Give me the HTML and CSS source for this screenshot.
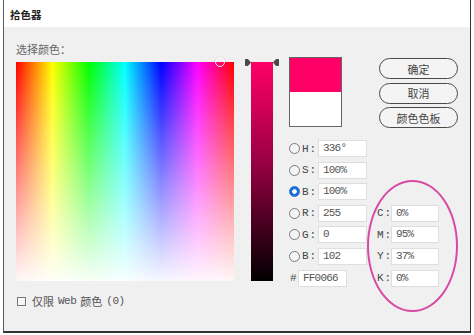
FILE: index.html
```html
<!DOCTYPE html>
<html lang="zh-CN">
<head>
    <meta charset="UTF-8">
    <meta name="viewport" content="width=device-width, initial-scale=1.0">
    <title>拾色器</title>
    <link rel="stylesheet" href="styles.css">
</head>
<body>
    <div class="window">
        <div class="title-bar">拾色器</div>

        <div class="dialog-body">
            <div class="left-col">
                <div class="pick-label">选择颜色：</div>
                <div class="color-field">
                    <span class="field-marker"></span>
                </div>
                <div class="web-only">
                    <span class="checkbox"></span>
                    <span>仅限</span>
                    <span class="mono">Web</span>
                    <span>颜色</span>
                    <span class="mono">(0)</span>
                </div>
            </div>

            <div class="slider-wrap">
                <div class="slider"></div>
                <svg class="arrow arrow-left" width="6" height="7" viewBox="0 0 6 7"><path d="M0.5 0.5 H3 L5.5 3.5 L3 6.5 H0.5 Z" fill="#4a4a4a" stroke="#4a4a4a" stroke-linejoin="round"/></svg>
                <svg class="arrow arrow-right" width="6" height="7" viewBox="0 0 6 7"><path d="M5.5 0.5 H3 L0.5 3.5 L3 6.5 H5.5 Z" fill="#4a4a4a" stroke="#4a4a4a" stroke-linejoin="round"/></svg>
            </div>

            <div class="right-col">
                <div class="top-row">
                    <div class="swatch">
                        <div class="swatch-new"></div>
                        <div class="swatch-old"></div>
                    </div>
                    <div class="buttons">
                        <button class="btn">确定</button>
                        <button class="btn">取消</button>
                        <button class="btn">颜色色板</button>
                    </div>
                </div>

                <div class="fields">
                    <div class="row r1"><span class="radio"></span><span class="key">H:</span><span class="val">336°</span></div>
                    <div class="row r2"><span class="radio"></span><span class="key">S:</span><span class="val">100%</span></div>
                    <div class="row r3"><span class="radio checked"></span><span class="key">B:</span><span class="val">100%</span></div>
                    <div class="row r4"><span class="radio"></span><span class="key">R:</span><span class="val">255</span></div>
                    <div class="row r5"><span class="radio"></span><span class="key">G:</span><span class="val">0</span></div>
                    <div class="row r6"><span class="radio"></span><span class="key">B:</span><span class="val">102</span></div>
                    <div class="row r7"><span class="key hash">#</span><span class="val">FF0066</span></div>

                    <div class="row cmyk r4"><span class="key">C:</span><span class="val">0%</span></div>
                    <div class="row cmyk r5"><span class="key">M:</span><span class="val">95%</span></div>
                    <div class="row cmyk r6"><span class="key">Y:</span><span class="val">37%</span></div>
                    <div class="row cmyk r7"><span class="key">K:</span><span class="val">0%</span></div>
                </div>
            </div>
        </div>

        <div class="highlight"></div>
    </div>
</body>
</html>
```

FILE: styles.css
```css
body {
    margin: 0;
    background-color: #ffffff;
    font-family: "Noto Sans CJK SC", sans-serif;
    color: #444;
}

.window {
    position: relative;
    box-sizing: border-box;
    margin-left: 3px;
    width: 468px;
    height: 333px;
    border-left: 1px solid #5a5a5a;
    border-right: 1px solid #333;
    border-bottom: 2px solid #333;
    background-color: #f0f0f0;
}

.title-bar {
    box-sizing: border-box;
    height: 27px;
    padding: 9px 0 0 6px;
    background-color: #ffffff;
    font-size: 10.5px;
    line-height: 12px;
    font-weight: bold;
    color: #222;
}

.dialog-body {
    display: flex;
    align-items: flex-start;
    padding-left: 12px;
}

/* left: saturation / hue field */
.left-col {
    margin-top: 15px;
}

.pick-label {
    height: 14px;
    margin-bottom: 6px;
    font-size: 11px;
    line-height: 14px;
    color: #666;
}

.color-field {
    position: relative;
    width: 218px;
    height: 219px;
    background:
        linear-gradient(to bottom, rgba(255, 255, 255, 0), rgba(255, 255, 255, 0.97)),
        linear-gradient(to right, #f00, #ff0, #0f0, #0ff, #00f, #f0f, #f00);
}

.field-marker {
    position: absolute;
    left: 199px;
    top: -5px;
    width: 10px;
    height: 10px;
    box-sizing: border-box;
    border: 1px solid rgba(255, 255, 255, 0.95);
    border-radius: 50%;
    box-shadow: 0 0 0 0.5px rgba(0, 0, 0, 0.15);
}

.web-only {
    display: flex;
    align-items: center;
    gap: 4px;
    height: 14px;
    margin-top: 13px;
    font-size: 11px;
    line-height: 14px;
    color: #555;
}

.checkbox {
    box-sizing: border-box;
    width: 9px;
    height: 9px;
    margin: 0 2px 0 1px;
    border: 1px solid #777;
    background-color: #f7f7f7;
}

.mono {
    font-family: "Liberation Mono", "Noto Sans CJK SC", monospace;
    letter-spacing: -0.5px;
}

/* brightness slider */
.slider-wrap {
    position: relative;
    width: 34px;
    margin: 35px 0 0 11px;
}

.slider {
    width: 22px;
    height: 219px;
    margin: 0 6px;
    background: linear-gradient(to bottom, #ff0066, #9a0044 45%, #000000);
}

.arrow {
    position: absolute;
    top: -3px;
}

.arrow-left {
    left: 0;
}

.arrow-right {
    right: 0;
}

/* right side */
.right-col {
    margin: 30px 0 0 10px;
}

.top-row {
    display: flex;
    align-items: flex-start;
}

.swatch {
    box-sizing: border-box;
    width: 53px;
    height: 70px;
    border: 1px solid #666;
}

.swatch-new {
    height: 34px;
    background-color: #ff0066;
}

.swatch-old {
    height: 34px;
    background-color: #ffffff;
}

.buttons {
    display: flex;
    flex-direction: column;
    gap: 3.5px;
    margin: 1px 0 0 37px;
}

.btn {
    box-sizing: border-box;
    width: 79px;
    height: 21px;
    padding: 0;
    border: 1.5px solid #4a4a4a;
    border-radius: 11px;
    background-color: #f4f4f4;
    font-family: "Noto Sans CJK SC", sans-serif;
    font-size: 11px;
    color: #444;
}

.fields {
    display: grid;
    grid-template-columns: 78px 62px;
    grid-template-rows: repeat(7, 17px);
    column-gap: 10px;
    row-gap: 4.6px;
    margin-top: 12px;
}

.row {
    display: flex;
    align-items: center;
    grid-column: 1;
    font-family: "Liberation Mono", monospace;
    font-size: 11px;
}

.row.cmyk {
    grid-column: 2;
}

.r1 { grid-row: 1; }
.r2 { grid-row: 2; }
.r3 { grid-row: 3; }
.r4 { grid-row: 4; }
.r5 { grid-row: 5; }
.r6 { grid-row: 6; }
.r7 { grid-row: 7; }

.radio {
    box-sizing: border-box;
    width: 11px;
    height: 11px;
    margin-right: 2px;
    border: 1px solid #7a7a7a;
    border-radius: 50%;
    background-color: #f5f5f5;
}

.radio.checked {
    border-color: #1f6fd6;
    background: radial-gradient(circle, #ffffff 0 2px, #1f6fd6 2.5px);
}

.key {
    width: 16px;
    color: #444;
    letter-spacing: 1px;
}

.key.hash {
    width: 9px;
    padding-left: 1px;
    box-sizing: border-box;
}

.cmyk .key {
    width: 14px;
}

.val {
    box-sizing: border-box;
    width: 49px;
    height: 17px;
    padding-left: 4px;
    border: 1px solid #dedede;
    background-color: #ffffff;
    line-height: 15px;
    color: #555;
    letter-spacing: -0.8px;
}

.cmyk .val {
    width: 48px;
}

/* annotation drawn over the CMYK fields */
.highlight {
    position: absolute;
    left: 363px;
    top: 180px;
    width: 91px;
    height: 132px;
    box-sizing: border-box;
    border: 2px solid #d84aa6;
    border-radius: 50%;
    pointer-events: none;
}
```
